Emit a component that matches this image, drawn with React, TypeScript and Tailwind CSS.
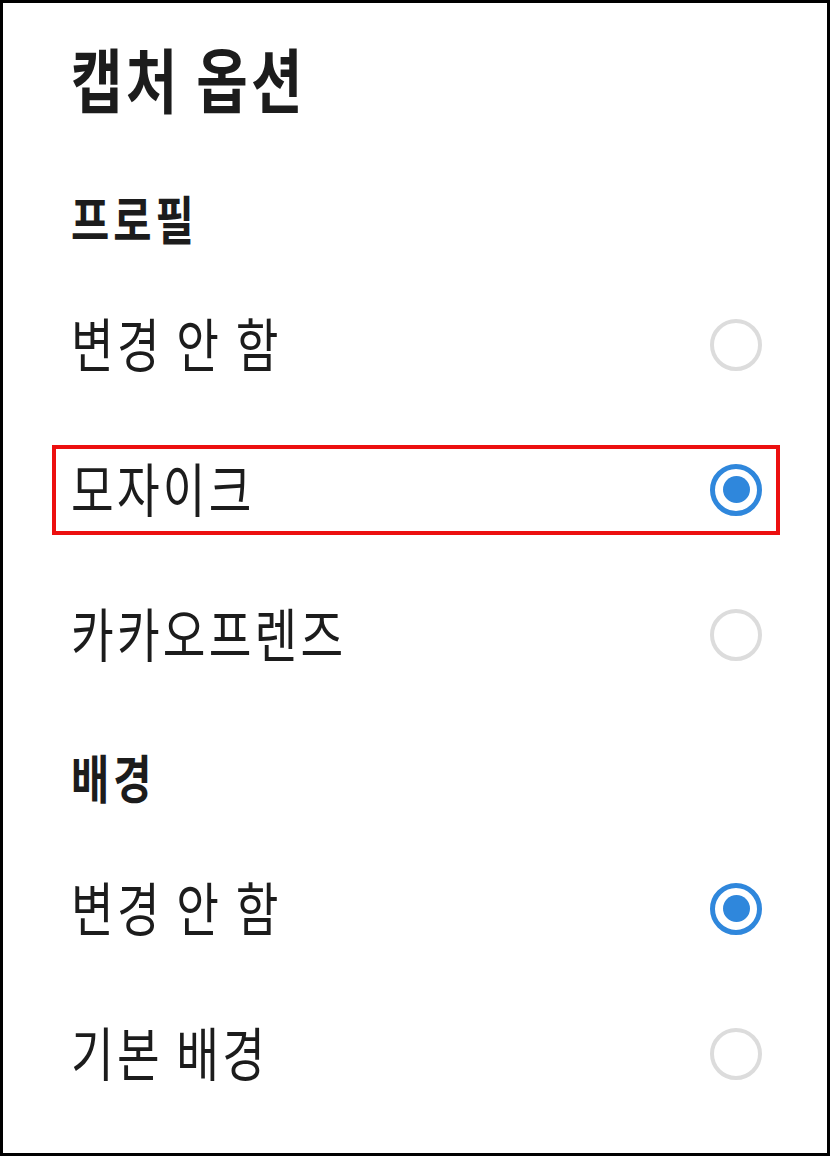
import React from 'react';

interface OptionRow {
  label: string;
  checked: boolean;
  highlight?: boolean;
}

interface OptionSection {
  id: string;
  title: string;
  topPad: string;
  height: string;
  rows: OptionRow[];
}

const sections: OptionSection[] = [
  {
    id: 'profile',
    title: '프로필',
    topPad: 'pt-[8px]',
    height: 'h-[111px]',
    rows: [
      { label: '변경 안 함', checked: false },
      { label: '모자이크', checked: true, highlight: true },
      { label: '카카오프렌즈', checked: false },
    ],
  },
  {
    id: 'background',
    title: '배경',
    topPad: 'pt-[17px]',
    height: 'h-[129px]',
    rows: [
      { label: '변경 안 함', checked: true },
      { label: '기본 배경', checked: false },
    ],
  },
];

const Radio: React.FC<{ checked: boolean }> = ({ checked }) =>
  checked ? (
    <div className="w-[52px] h-[52px] rounded-full border-[5px] border-[#2f87dc] flex items-center justify-center">
      <div className="w-[27px] h-[27px] rounded-full bg-[#2f87dc]" />
    </div>
  ) : (
    <div className="w-[52px] h-[52px] rounded-full border-4 border-[#dcdcdc]" />
  );

export default function App() {
  return (
    <div className="w-[830px] h-[1156px] border-[3px] border-black bg-white overflow-hidden pl-[49px] pr-[47px] text-[#1c1c1c] font-['Noto_Sans_CJK_KR',sans-serif]">
      {/* Title */}
      <div className="h-[158px] flex items-center pl-[19px]">
        <span className="inline-block origin-left scale-x-[0.8] -translate-y-[4px] text-[70px] leading-none font-bold tracking-[4px] whitespace-nowrap">
          캡처 옵션
        </span>
      </div>

      {sections.map((section) => (
        <div key={section.id}>
          <div className={`${section.height} ${section.topPad} flex items-center pl-[19px]`}>
            <span className="inline-block origin-left scale-x-[0.8] -translate-y-[3px] text-[52px] leading-none font-bold tracking-[5px] whitespace-nowrap">
              {section.title}
            </span>
          </div>

          {section.rows.map((row, idx) => (
            <div key={idx} className="h-[145px] flex items-center">
              <div
                className={`w-full h-[90px] flex items-center justify-between pl-[15px] pr-[14px] border-4 ${
                  row.highlight ? 'border-[#ec1010]' : 'border-transparent'
                }`}
              >
                <span className="inline-block origin-left scale-x-[0.8] -translate-y-[3px] text-[58px] leading-none tracking-[4px] whitespace-nowrap">
                  {row.label}
                </span>
                <Radio checked={row.checked} />
              </div>
            </div>
          ))}
        </div>
      ))}
    </div>
  );
}
